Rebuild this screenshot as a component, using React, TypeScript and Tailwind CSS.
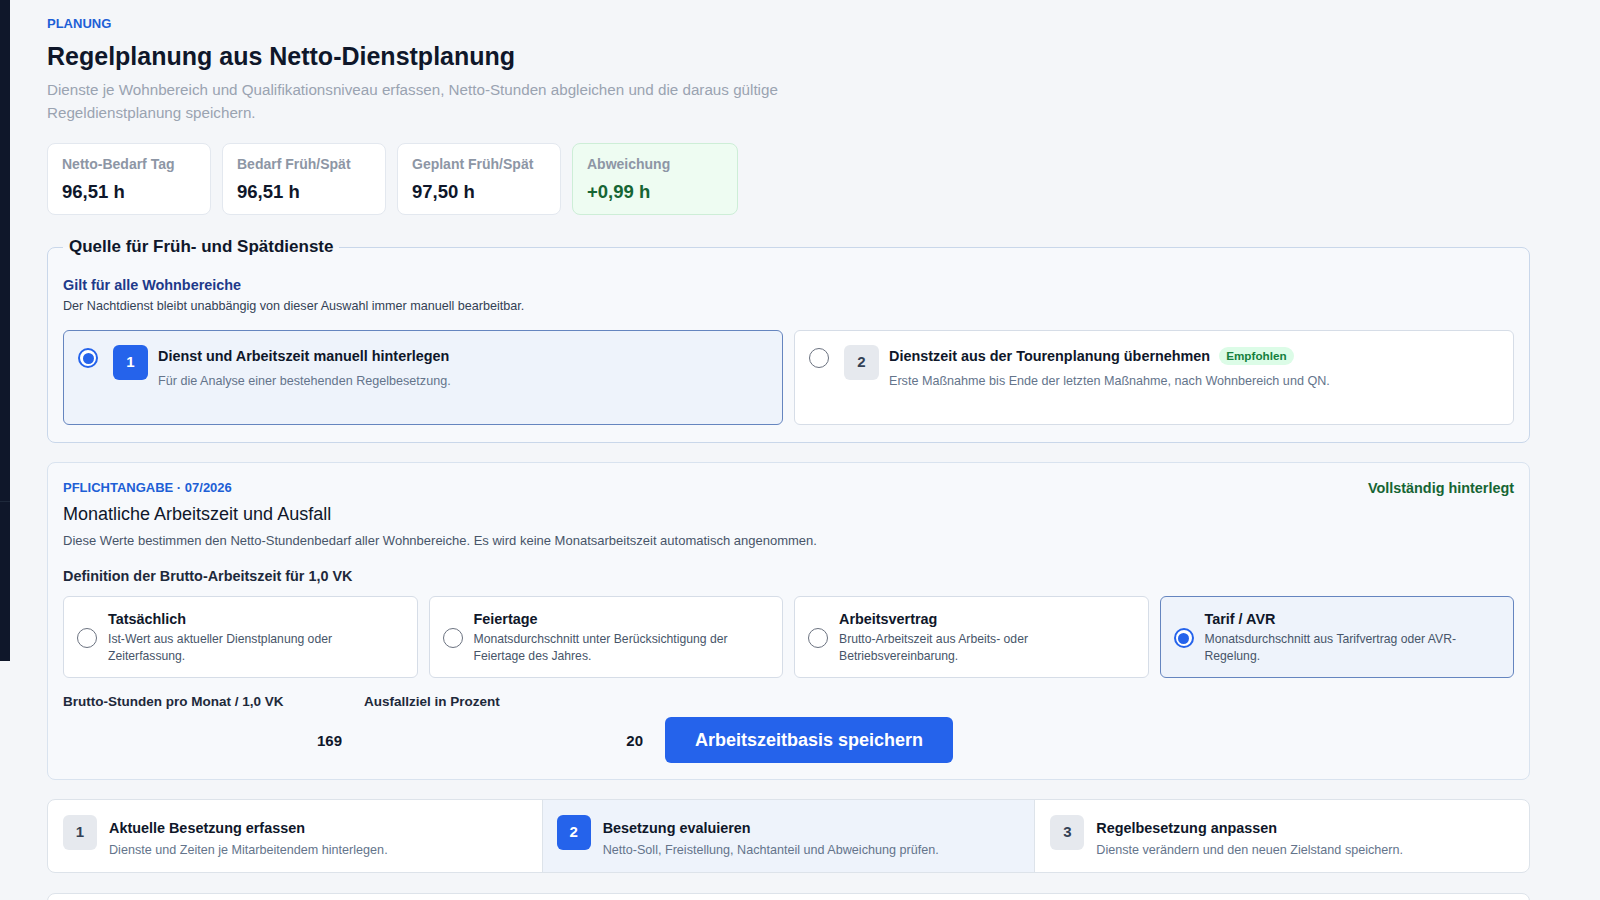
import React from 'react';

const stats = [
  { label: 'Netto-Bedarf Tag', value: '96,51 h' },
  { label: 'Bedarf Früh/Spät', value: '96,51 h' },
  { label: 'Geplant Früh/Spät', value: '97,50 h' },
];

const definitions = [
  { title: 'Tatsächlich', text: 'Ist-Wert aus aktueller Dienstplanung oder Zeiterfassung.' },
  { title: 'Feiertage', text: 'Monatsdurchschnitt unter Berücksichtigung der Feiertage des Jahres.' },
  { title: 'Arbeitsvertrag', text: 'Brutto-Arbeitszeit aus Arbeits- oder Betriebsvereinbarung.' },
  { title: 'Tarif / AVR', text: 'Monatsdurchschnitt aus Tarifvertrag oder AVR-Regelung.', active: true },
];

const steps = [
  { n: '1', title: 'Aktuelle Besetzung erfassen', text: 'Dienste und Zeiten je Mitarbeitendem hinterlegen.' },
  { n: '2', title: 'Besetzung evaluieren', text: 'Netto-Soll, Freistellung, Nachtanteil und Abweichung prüfen.', active: true },
  { n: '3', title: 'Regelbesetzung anpassen', text: 'Dienste verändern und den neuen Zielstand speichern.' },
];

function Radio({ checked }: { checked?: boolean }) {
  if (checked) {
    return (
      <span className="w-5 h-5 shrink-0 rounded-full border-2 border-[#2563eb] bg-white flex items-center justify-center">
        <span className="block w-[11px] h-[11px] rounded-full bg-[#2563eb]" />
      </span>
    );
  }
  return <span className="block w-5 h-5 shrink-0 rounded-full border-[1.5px] border-[#6b7280] bg-white" />;
}

export default function App() {
  return (
    <div className="min-h-screen bg-[#f4f6f9] flex items-start font-['Liberation_Sans',Arial,sans-serif] text-[#0f172a]">
      {/* Sidebar edge */}
      <aside className="w-[10px] h-[661px] shrink-0 bg-[#0f172a] flex flex-col">
        <div className="h-[502px] border-b border-[#1e293b]" />
      </aside>

      <main className="flex-1 pl-[37px] pr-[70px] pt-4 pb-10">
        <div className="text-[13px] leading-4 font-bold text-[#1d5fd6] uppercase">Planung</div>
        <h1 className="mt-2 text-[25px] leading-8 font-bold text-[#0f172a]">Regelplanung aus Netto-Dienstplanung</h1>
        <p className="mt-[6px] max-w-[750px] text-[15.2px] leading-[23px] text-[#9aa3b1]">
          Dienste je Wohnbereich und Qualifikationsniveau erfassen, Netto-Stunden abgleichen und die daraus gültige
          Regeldienstplanung speichern.
        </p>

        {/* Stats */}
        <div className="mt-[19px] flex gap-[11px]">
          {stats.map((s) => (
            <div key={s.label} className="w-[164px] h-[72px] rounded-lg border border-[#e3e8ef] bg-white px-[14px] pt-[10px]">
              <div className="text-[14px] leading-5 font-bold text-[#8d96a5]">{s.label}</div>
              <div className="mt-[6px] text-[18.5px] leading-6 font-bold text-[#0f172a]">{s.value}</div>
            </div>
          ))}
          <div className="w-[166px] h-[72px] rounded-lg border border-[#cdeed7] bg-[#eefcf2] px-[14px] pt-[10px]">
            <div className="text-[14px] leading-5 font-bold text-[#8d96a5]">Abweichung</div>
            <div className="mt-[6px] text-[18.5px] leading-6 font-bold text-[#166534]">+0,99 h</div>
          </div>
        </div>

        {/* Quelle */}
        <fieldset className="mt-5 rounded-lg border border-[#c9d7ea] bg-[#f7f9fc] px-[15px] pb-[17px]">
          <legend className="px-[6px] text-[17px] leading-6 font-bold text-[#0f172a]">Quelle für Früh- und Spätdienste</legend>
          <div className="mt-4 text-[14.4px] leading-5 font-bold text-[#1e3a8a]">Gilt für alle Wohnbereiche</div>
          <div className="mt-[2px] text-[12.6px] leading-[18px] text-[#334155]">
            Der Nachtdienst bleibt unabbängig von dieser Auswahl immer manuell bearbeitbar.
          </div>
          <div className="mt-[15px] grid grid-cols-2 gap-[11px]">
            <div className="h-[95px] rounded-md border border-[#6585bf] bg-[#eef3fb] flex items-start gap-[15px] pl-[14px] pt-[14px]">
              <span className="mt-[3px] flex"><Radio checked /></span>
              <span className="w-[35px] h-[35px] rounded-md bg-[#2563eb] text-white text-[15px] font-bold flex items-center justify-center">1</span>
              <div className="-ml-[5px] pt-[1px]">
                <div className="text-[14.4px] leading-5 font-bold text-[#0f172a]">Dienst und Arbeitszeit manuell hinterlegen</div>
                <div className="mt-[6px] text-[12.6px] leading-[18px] text-[#64748b]">Für die Analyse einer bestehenden Regelbesetzung.</div>
              </div>
            </div>
            <div className="h-[95px] rounded-md border border-[#d6dde7] bg-white flex items-start gap-[15px] pl-[14px] pt-[14px]">
              <span className="mt-[3px] flex"><Radio /></span>
              <span className="w-[35px] h-[35px] rounded-md bg-[#e6e9ee] text-[#334155] text-[15px] font-bold flex items-center justify-center">2</span>
              <div className="-ml-[5px] pt-[1px]">
                <div className="flex items-center gap-[9px]">
                  <span className="text-[14.4px] leading-5 font-bold text-[#0f172a]">Dienstzeit aus der Tourenplanung übernehmen</span>
                  <span className="rounded-full bg-[#dcfce7] px-[7px] h-[18px] flex items-center text-[11.7px] font-bold text-[#15803d]">Empfohlen</span>
                </div>
                <div className="mt-[6px] text-[12.6px] leading-[18px] text-[#64748b]">
                  Erste Maßnahme bis Ende der letzten Maßnahme, nach Wohnbereich und QN.
                </div>
              </div>
            </div>
          </div>
        </fieldset>

        {/* Monatliche Arbeitszeit */}
        <section className="mt-[19px] rounded-lg border border-[#d9e3ef] bg-[#f7f9fc] px-[15px] pt-[17px] pb-[16px]">
          <div className="flex items-start justify-between">
            <div className="text-[13px] leading-4 font-bold text-[#1d5fd6]">PFLICHTANGABE · 07/2026</div>
            <div className="text-[14.4px] leading-4 font-bold text-[#166534]">Vollständig hinterlegt</div>
          </div>
          <h2 className="mt-[5px] text-[18px] leading-[26px] text-[#0f172a]">Monatliche Arbeitszeit und Ausfall</h2>
          <p className="mt-1 text-[13px] leading-5 text-[#475569]">
            Diese Werte bestimmen den Netto-Stundenbedarf aller Wohnbereiche. Es wird keine Monatsarbeitszeit automatisch angenommen.
          </p>
          <div className="mt-[15px] text-[14.4px] leading-5 font-bold text-[#1e293b]">Definition der Brutto-Arbeitszeit für 1,0 VK</div>

          <div className="mt-[10px] grid grid-cols-4 gap-[11px]">
            {definitions.map((d) => (
              <div
                key={d.title}
                className={
                  d.active
                    ? 'h-[82px] rounded-md border border-[#6585bf] bg-[#eef3fb] flex items-center gap-[11px] pl-[13px] pr-6'
                    : 'h-[82px] rounded-md border border-[#d6dde7] bg-white flex items-center gap-[11px] pl-[13px] pr-6'
                }
              >
                <span className="mt-[2px] flex"><Radio checked={d.active} /></span>
                <div>
                  <div className="text-[14.4px] leading-5 font-bold text-[#0f172a]">{d.title}</div>
                  <div className="mt-[2px] text-[12.2px] leading-[17px] text-[#475569]">{d.text}</div>
                </div>
              </div>
            ))}
          </div>

          <div className="mt-[14px] grid grid-cols-[287px_287px_288px] gap-x-[14px] items-end">
            <div>
              <div className="text-[13.5px] leading-5 font-bold text-[#1e293b]">Brutto-Stunden pro Monat / 1,0 VK</div>
              <input
                readOnly
                value="169"
                className="mt-[5px] w-full h-[46px] bg-transparent text-right pr-2 text-[15px] font-bold text-[#0f172a] outline-none"
              />
            </div>
            <div>
              <div className="text-[13.5px] leading-5 font-bold text-[#1e293b]">Ausfallziel in Prozent</div>
              <input
                readOnly
                value="20"
                className="mt-[5px] w-full h-[46px] bg-transparent text-right pr-2 text-[15px] font-bold text-[#0f172a] outline-none"
              />
            </div>
            <button className="h-[46px] rounded-md bg-[#2563eb] text-white text-[18px] font-bold">Arbeitszeitbasis speichern</button>
          </div>
        </section>

        {/* Steps */}
        <div className="mt-[19px] h-[74px] rounded-lg border border-[#dde3ea] bg-white grid grid-cols-3 overflow-hidden">
          {steps.map((s) => (
            <div
              key={s.n}
              className={
                s.active
                  ? 'bg-[#eef3fb] border-l border-[#dde3ea] border-r flex items-start gap-3 pl-[14px] pt-[15px]'
                  : 'flex items-start gap-3 pl-[15px] pt-[15px]'
              }
            >
              <span
                className={
                  s.active
                    ? 'w-[34px] h-[35px] rounded-md bg-[#2563eb] text-white text-[15px] font-bold flex items-center justify-center'
                    : 'w-[34px] h-[35px] rounded-md bg-[#e6e9ee] text-[#334155] text-[15px] font-bold flex items-center justify-center'
                }
              >
                {s.n}
              </span>
              <div className="pt-[3px]">
                <div className="text-[14.4px] leading-5 font-bold text-[#0f172a]">{s.title}</div>
                <div className="mt-[3px] text-[12.6px] leading-[18px] text-[#64748b]">{s.text}</div>
              </div>
            </div>
          ))}
        </div>

        <div className="mt-5 h-[120px] rounded-lg border border-[#dde3ea] bg-white" />
      </main>
    </div>
  );
}
